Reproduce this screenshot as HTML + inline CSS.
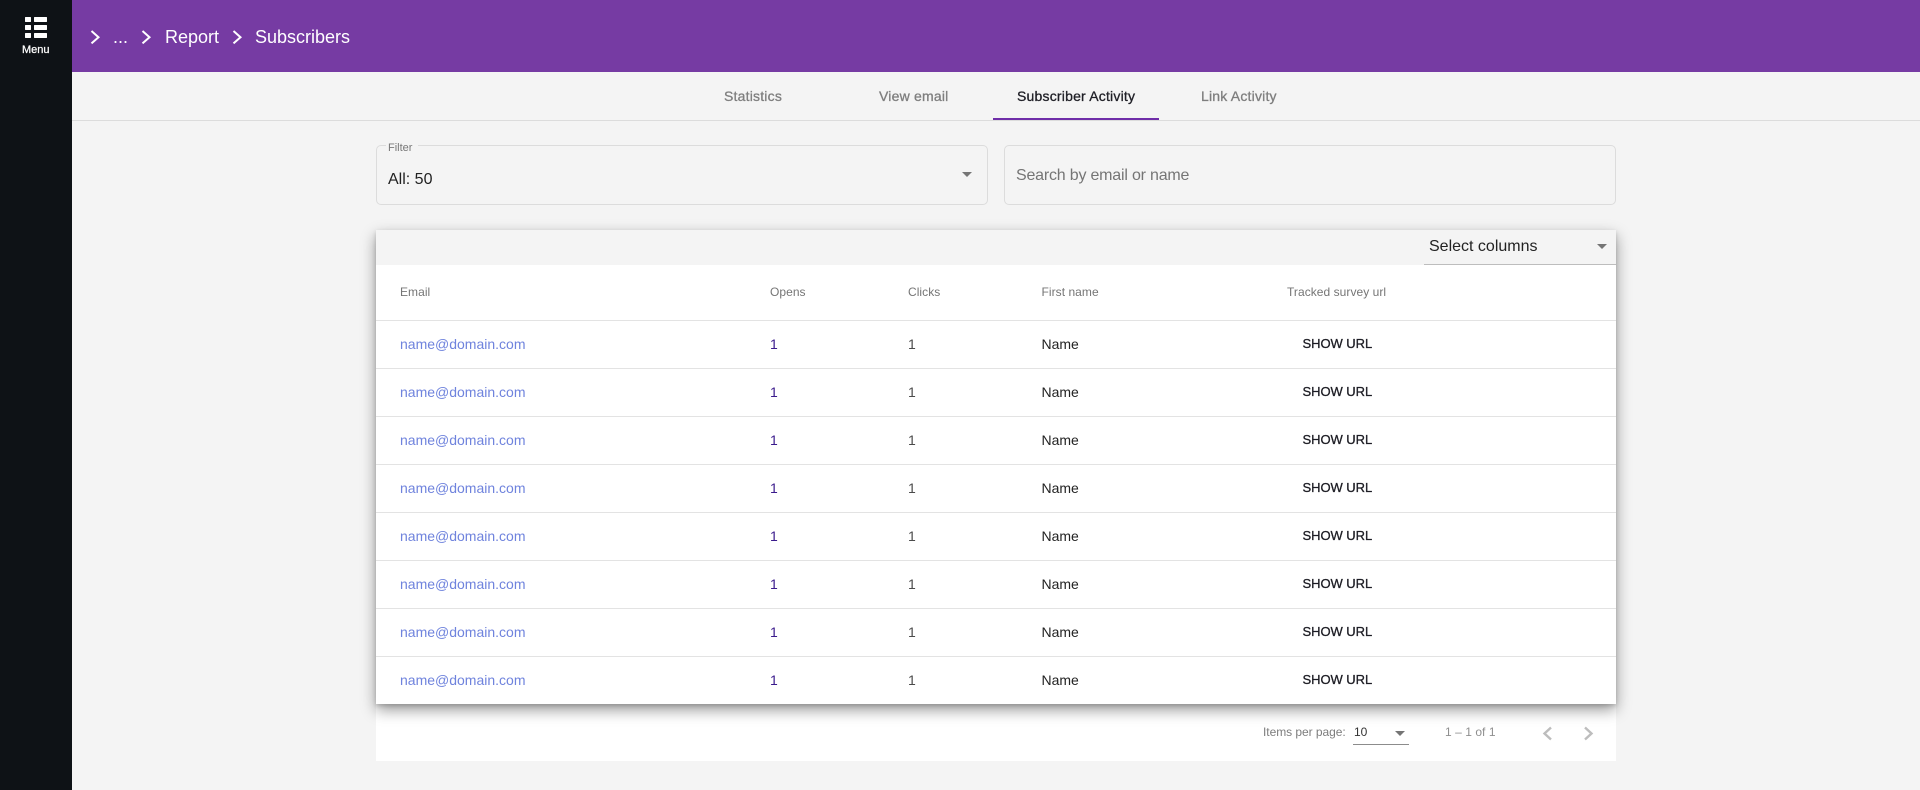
<!DOCTYPE html>
<html><head><meta charset="utf-8"><title>Subscribers</title>
<style>
*{box-sizing:border-box}
html,body{margin:0;padding:0;width:1920px;height:790px;overflow:hidden;background:#f4f4f4;font-family:"Liberation Sans",Arial,sans-serif}
.a{position:absolute;white-space:nowrap;line-height:20px}
#side{position:absolute;left:0;top:0;width:72px;height:790px;background:#0e1216}
#head{position:absolute;left:72px;top:0;width:1848px;height:72px;background:#763ba3}
#tabline{position:absolute;left:72px;top:120px;width:1848px;height:1px;background:#dcdcdc}
.tab{font-size:14px;color:#7e7e7e;top:86px;-webkit-text-stroke:.3px currentColor;letter-spacing:.2px}
.box{position:absolute;top:145px;height:60px;border:1px solid #dcdcdc;border-radius:5px}
#white{position:absolute;left:376px;top:700px;width:1240px;height:61px;background:#fff}
#card{position:absolute;left:376px;top:230px;width:1240px;height:474px;background:#fff;box-shadow:0 6px 14px rgba(0,0,0,.4),0 2px 4px rgba(0,0,0,.15)}
#tool{position:absolute;left:0;top:0;width:1240px;height:35px;background:#f4f4f4}
.line{position:absolute;left:0;width:1240px;height:1px;background:#e3e3e3}
.th{font-size:12px;color:#757575;top:282px;letter-spacing:.05px}
.r{font-size:14px;color:#222}
.e{color:#6f83dd}
.o{color:#3a1a8c}
.c{color:#4b4b4b}
.s{font-size:13px;color:#1d1d24;-webkit-text-stroke:.3px currentColor;letter-spacing:-.05px}
</style></head><body>
<div id="side"></div>
<svg class="a" style="left:25px;top:17px" width="22" height="21" viewBox="0 0 22 21"><g fill="#fff"><rect x="0" y="0" width="6" height="5" rx=".6"/><rect x="0" y="8" width="6" height="5" rx=".6"/><rect x="0" y="16" width="6" height="5" rx=".6"/><rect x="9" y="0" width="13" height="5" rx=".6"/><rect x="9" y="8" width="13" height="5" rx=".6"/><rect x="9" y="16" width="13" height="5" rx=".6"/></g></svg>
<div class="a" style="left:22px;top:40px;font-size:11px;color:#fff;-webkit-text-stroke:.25px #fff">Menu</div>
<div id="head"></div>
<svg class="a" style="left:0;top:0" width="260" height="72"><g fill="none" stroke="#fff" stroke-width="2"><path d="M91.5 31l7 6.2-7 6.2"/><path d="M142.5 31l7 6.2-7 6.2"/><path d="M233.5 31l7 6.2-7 6.2"/></g></svg>
<div class="a" style="left:113px;top:27px;font-size:18px;color:#fff">...</div>
<div class="a" style="left:165px;top:27px;font-size:18px;color:#fff">Report</div>
<div class="a" style="left:255px;top:27px;font-size:18px;color:#fff">Subscribers</div>

<div class="a tab" style="left:724px">Statistics</div>
<div class="a tab" style="left:879px">View email</div>
<div class="a tab" style="left:1017px;color:#1f1f26">Subscriber Activity</div>
<div class="a tab" style="left:1201px">Link Activity</div>
<div id="tabline"></div>
<div class="a" style="left:993px;top:118px;width:166px;height:2px;background:#6f2da8"></div>

<div class="box" style="left:376px;width:612px"></div>
<div class="a" style="left:386px;top:144px;width:32px;height:3px;background:#f4f4f4"></div>
<div class="a" style="left:388px;top:138px;font-size:11px;color:#777">Filter</div>
<div class="a" style="left:388px;top:170px;font-size:16px;color:#222">All: 50</div>
<svg class="a" style="left:962px;top:172px" width="10" height="5"><path d="M0 0h10L5 5z" fill="#757575"/></svg>
<div class="box" style="left:1004px;width:612px"></div>
<div class="a" style="left:1016px;top:166px;font-size:16px;color:#757575;letter-spacing:-.2px">Search by email or name</div>

<div id="white"></div>
<div id="card">
<div id="tool"></div>
<div class="line" style="top:90px"></div>
<div class="line" style="top:138px"></div>
<div class="line" style="top:186px"></div>
<div class="line" style="top:234px"></div>
<div class="line" style="top:282px"></div>
<div class="line" style="top:330px"></div>
<div class="line" style="top:378px"></div>
<div class="line" style="top:426px"></div>
</div>
<div class="a" style="left:1424px;top:264px;width:192px;height:1px;background:#bdbdbd"></div>
<div class="a" style="left:1429px;top:237px;font-size:16px;color:#222">Select columns</div>
<svg class="a" style="left:1597px;top:244px" width="10" height="5"><path d="M0 0h10L5 5z" fill="#757575"/></svg>

<div class="a th" style="left:400px">Email</div>
<div class="a th" style="left:770px">Opens</div>
<div class="a th" style="left:908px">Clicks</div>
<div class="a th" style="left:1041.5px">First name</div>
<div class="a th" style="left:1287px">Tracked survey url</div>

<div class="a r e" style="left:400px;top:334px">name@domain.com</div><div class="a r o" style="left:770px;top:334px">1</div><div class="a r c" style="left:908px;top:334px">1</div><div class="a r" style="left:1041.5px;top:334px">Name</div><div class="a s" style="left:1302.5px;top:334px">SHOW URL</div>
<div class="a r e" style="left:400px;top:382px">name@domain.com</div><div class="a r o" style="left:770px;top:382px">1</div><div class="a r c" style="left:908px;top:382px">1</div><div class="a r" style="left:1041.5px;top:382px">Name</div><div class="a s" style="left:1302.5px;top:382px">SHOW URL</div>
<div class="a r e" style="left:400px;top:430px">name@domain.com</div><div class="a r o" style="left:770px;top:430px">1</div><div class="a r c" style="left:908px;top:430px">1</div><div class="a r" style="left:1041.5px;top:430px">Name</div><div class="a s" style="left:1302.5px;top:430px">SHOW URL</div>
<div class="a r e" style="left:400px;top:478px">name@domain.com</div><div class="a r o" style="left:770px;top:478px">1</div><div class="a r c" style="left:908px;top:478px">1</div><div class="a r" style="left:1041.5px;top:478px">Name</div><div class="a s" style="left:1302.5px;top:478px">SHOW URL</div>
<div class="a r e" style="left:400px;top:526px">name@domain.com</div><div class="a r o" style="left:770px;top:526px">1</div><div class="a r c" style="left:908px;top:526px">1</div><div class="a r" style="left:1041.5px;top:526px">Name</div><div class="a s" style="left:1302.5px;top:526px">SHOW URL</div>
<div class="a r e" style="left:400px;top:574px">name@domain.com</div><div class="a r o" style="left:770px;top:574px">1</div><div class="a r c" style="left:908px;top:574px">1</div><div class="a r" style="left:1041.5px;top:574px">Name</div><div class="a s" style="left:1302.5px;top:574px">SHOW URL</div>
<div class="a r e" style="left:400px;top:622px">name@domain.com</div><div class="a r o" style="left:770px;top:622px">1</div><div class="a r c" style="left:908px;top:622px">1</div><div class="a r" style="left:1041.5px;top:622px">Name</div><div class="a s" style="left:1302.5px;top:622px">SHOW URL</div>
<div class="a r e" style="left:400px;top:670px">name@domain.com</div><div class="a r o" style="left:770px;top:670px">1</div><div class="a r c" style="left:908px;top:670px">1</div><div class="a r" style="left:1041.5px;top:670px">Name</div><div class="a s" style="left:1302.5px;top:670px">SHOW URL</div>

<div class="a" style="left:1263px;top:722px;font-size:12px;color:#7d7d7d;letter-spacing:-.05px">Items per page:</div>
<div class="a" style="left:1354px;top:722px;font-size:12px;color:#333">10</div>
<svg class="a" style="left:1395px;top:731px" width="10" height="5"><path d="M0 0h10L5 5z" fill="#757575"/></svg>
<div class="a" style="left:1353px;top:744px;width:56px;height:1px;background:#8c8c8c"></div>
<div class="a" style="left:1445px;top:722px;font-size:12px;color:#8f8f8f;letter-spacing:.05px">1 – 1 of 1</div>
<svg class="a" style="left:1540px;top:722px" width="60" height="22"><g fill="none" stroke="#bdbdbd" stroke-width="2.4"><path d="M11 5.5L4.5 11.5 11 17.5"/><path d="M45 5.5L51.5 11.5 45 17.5"/></g></svg>
</body></html>
